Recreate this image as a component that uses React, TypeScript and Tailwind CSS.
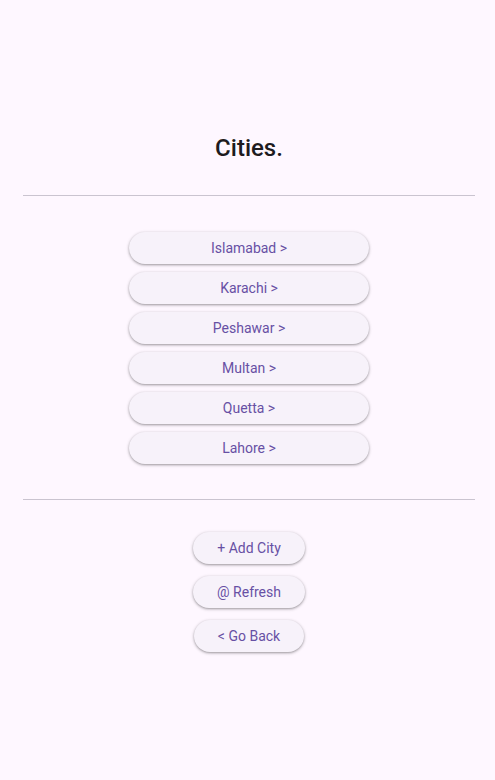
const cities = ["Islamabad", "Karachi", "Peshawar", "Multan", "Quetta", "Lahore"];

const btn =
  "h-8 rounded-full bg-[#f7f2fa] text-[14px] text-[#6750a4] shadow-[0_1px_2px_rgba(0,0,0,0.25),0_1px_3px_1px_rgba(0,0,0,0.12)] flex items-center justify-center";

export default function App() {
  return (
    <div
      className="min-h-[780px] w-full bg-[#fef7ff] pl-[3px] flex flex-col items-center"
      style={{ fontFamily: "Roboto, 'Liberation Sans', sans-serif" }}
    >
      <h1 className="mt-[132px] h-8 leading-8 text-[24px] font-medium text-[#1d1b20]">
        Cities.
      </h1>
      <div className="mt-[31px] self-stretch mx-[20px] h-px bg-[#cac4d0]" />
      <div className="mt-[36px] flex flex-col gap-2">
        {cities.map((c) => (
          <button key={c} className={`${btn} w-[240px]`}>
            {c} &gt;
          </button>
        ))}
      </div>
      <div className="mt-[35px] self-stretch mx-[20px] h-px bg-[#cac4d0]" />
      <div className="mt-[32px] flex flex-col items-center gap-3">
        <button className={`${btn} px-6`}>+ Add City</button>
        <button className={`${btn} px-6`}>@ Refresh</button>
        <button className={`${btn} px-6`}>&lt; Go Back</button>
      </div>
    </div>
  );
}
